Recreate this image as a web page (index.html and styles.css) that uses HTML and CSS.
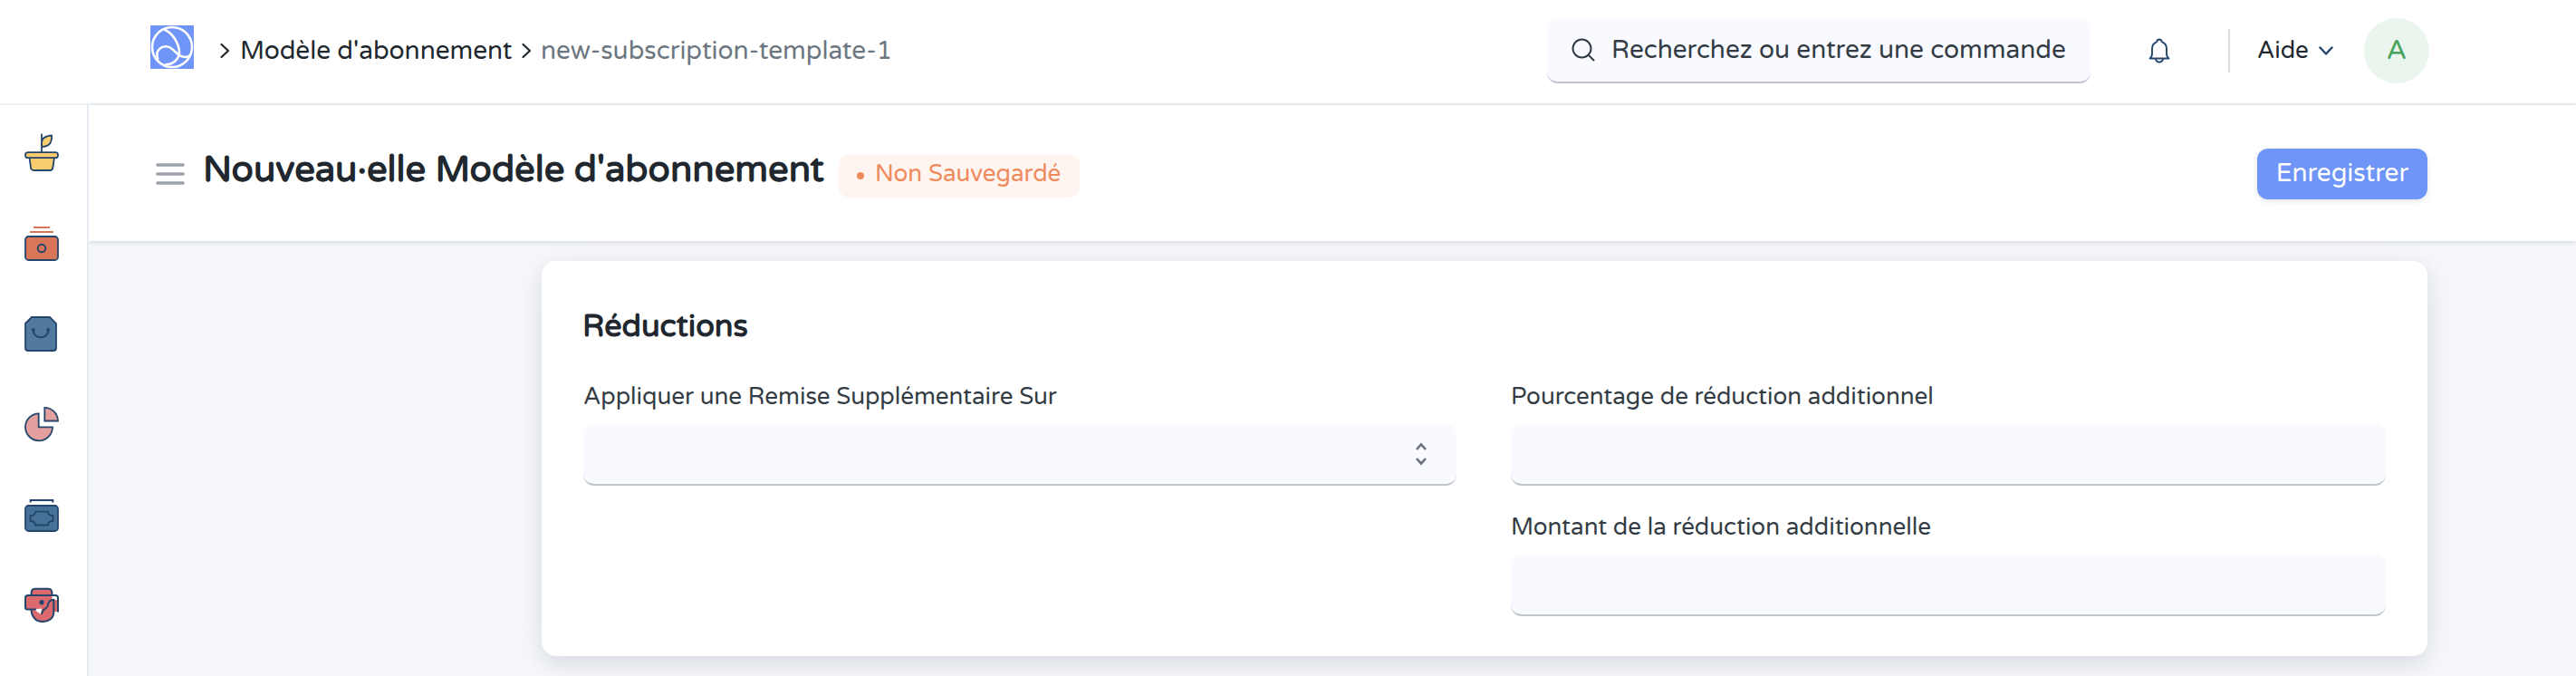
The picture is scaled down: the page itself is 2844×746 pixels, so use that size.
FILE: index.html
```html
<!DOCTYPE html>
<html lang="fr">
<head>
<meta charset="utf-8">
<title>Nouveau·elle Modèle d'abonnement</title>
<link rel="stylesheet" href="styles.css">
</head>
<body>
<header class="navbar">
  <svg class="logo" viewBox="0 0 48 48"><rect width="48" height="48" rx="1" fill="#6e95f7"/><g fill="none" stroke="#fff" stroke-width="2.6"><circle cx="24" cy="24" r="22"/><path d="M15.500 4.500C25 9 31 19 32 29C32 37 26 43 16 43.500"/><path d="M8.500 38C4 26 14 22.500 19 23.500C27 25 29 35 38 35C41 35 43 34 44 33"/></g></svg>
  <nav class="crumbs">
    <svg class="sep" viewBox="0 0 12 18"><path d="M2.500 2L10 9L2.500 16"/></svg>
    <span class="crumb crumb-link">Modèle d'abonnement</span>
    <svg class="sep" viewBox="0 0 12 18"><path d="M2.500 2L10 9L2.500 16"/></svg>
    <span class="crumb crumb-current">new-subscription-template-1</span>
  </nav>
  <div class="search">
    <svg class="search-icon" viewBox="0 0 26 26"><circle cx="11.500" cy="11.500" r="10"/><path d="M19 19L24.500 24.500"/></svg>
    <span class="search-text">Recherchez ou entrez une commande</span>
  </div>
  <svg class="bell" viewBox="0 0 24 28"><path d="M1.500 22.500H22.500C20.500 21 20 19.500 20 17V12C20 8 18 5.500 14.800 4.200C14.800 2.500 13.500 1.500 12 1.500S9.200 2.500 9.200 4.200C6 5.500 4 8 4 12V17C4 19.500 3.500 21 1.500 22.500ZM8 22.500C8 25 10 26.500 12 26.500S16 25 16 22.500"/></svg>
  <span class="divider"></span>
  <span class="help">Aide</span>
  <svg class="caret" viewBox="0 0 16 11"><path d="M1.500 1.500L8 8.500L14.500 1.500"/></svg>
  <span class="avatar">A</span>
</header>
<div class="shell">
  <aside class="rail">
    <svg class="rail-icon" viewBox="0 0 96 100"><g fill="#f9cd6d" stroke="#24466d" stroke-width="1.800" stroke-linejoin="round"><path d="M46 50V29.500M46 44C45 36 48 32 57 31.500C57.500 40 54 44 46 44Z"/><path d="M32.500 56L34 67C34.300 69.200 35.500 70 37.500 70H55C57 70 58 69 58.300 67L60 56Z"/><rect x="28" y="50.200" width="36" height="6" rx="2.800"/></g></svg>
    <svg class="rail-icon" viewBox="0 0 96 100"><path d="M37 33H55M33 38H59" stroke="#d97558" stroke-width="2"/><rect x="28" y="43" width="36" height="26" rx="3.500" fill="#d97558" stroke="#24466d" stroke-width="1.800"/><circle cx="46" cy="56" r="4.300" fill="none" stroke="#24466d" stroke-width="2"/></svg>
    <svg class="rail-icon" viewBox="0 0 96 100"><path d="M28 39L35 32H55L62 39V66Q62 69 59 69H31Q28 69 28 66Z" fill="#527a9e" stroke="#24466d" stroke-width="1.800"/><path d="M36.500 46C37 57 53 57 53.500 46" fill="none" stroke="#24466d" stroke-width="2"/><circle cx="36.800" cy="46" r="1.900" fill="#24466d"/><circle cx="53.200" cy="46" r="1.900" fill="#24466d"/></svg>
    <svg class="rail-icon" viewBox="0 0 96 100"><g fill="#e3a09f" stroke="#24466d" stroke-width="1.800"><path d="M42.700 38.300V53.300H58A15 15 0 1 1 42.700 38.300Z"/><path d="M49.300 31.800A15 15 0 0 1 64 46.500H49.300Z"/></g></svg>
    <svg class="rail-icon" viewBox="0 0 96 100"><path d="M33.700 36.500V34H58.300V36.500" fill="none" stroke="#24466d" stroke-width="2"/><rect x="28" y="40" width="36" height="28" rx="3.500" fill="#477297" stroke="#24466d" stroke-width="1.800"/><path d="M39 46.700H53C53 50 55.500 51 58.500 51V57C55.500 57 53 58.500 53 61.500H39C39 58.500 36.500 57 33.500 57V51C36.500 51 39 50 39 46.700Z" fill="none" stroke="#24466d" stroke-width="1.800"/></svg>
    <svg class="rail-icon" viewBox="0 0 96 100"><path d="M34.500 40C34.500 33 35.500 31.800 39 31.800H53C56.500 31.800 57.500 33 57.500 40V44H63V57H59.300C59.300 64 54 68 46.500 68C40 68 35 63 34.500 54H28V39H34.500Z" fill="#da6a6e"/><path d="M37 54.500L46 53.500L45.500 60Z" fill="#fff"/><g fill="none" stroke="#24466d" stroke-width="2"><path d="M34.500 38.500C34.500 33 35.500 31.800 39 31.800H53C56.500 31.800 57.500 33 57.500 38.500"/><path d="M40 54.500H30Q28 54.500 28 52.500V41.500Q28 39 31 39H61Q64 39 64 42V57.500"/><path d="M34.500 55C35 63 40 68 46.500 68C54 68 59.300 64 59.300 58V43.800C55 43.800 53 47 52.500 51C52 54.500 46.500 53 46 60"/></g><circle cx="46" cy="46.700" r="2.600" fill="#24466d"/></svg>
  </aside>
  <main class="page">
    <section class="page-head">
      <svg class="burger" viewBox="0 0 32 24"><path d="M2 2H30M2 12H30M2 22H30"/></svg>
      <h1 class="title">Nouveau·elle Modèle d'abonnement</h1>
      <span class="badge"><span class="dot"></span><span class="badge-text">Non Sauvegardé</span></span>
      <button class="save"><span class="save-text">Enregistrer</span></button>
    </section>
    <section class="card">
      <h2 class="card-title">Réductions</h2>
      <div class="columns">
        <div class="column">
          <div class="field">
            <label class="label label-apply">Appliquer une Remise Supplémentaire Sur</label>
            <div class="input select"><svg class="arrows" viewBox="0 0 14 26"><path d="M2 8L7 2.500L12 8M2 18L7 23.500L12 18"/></svg></div>
          </div>
        </div>
        <div class="column">
          <div class="field">
            <label class="label label-percent">Pourcentage de réduction additionnel</label>
            <div class="input"></div>
          </div>
          <div class="field">
            <label class="label label-amount">Montant de la réduction additionnelle</label>
            <div class="input"></div>
          </div>
        </div>
      </div>
    </section>
  </main>
</div>
</body>
</html>
```
FILE: styles.css
```css
* { box-sizing: border-box; }
body {
  margin: 0;
  height: 746px;
  overflow: hidden;
  background: #f5f7fb;
  color: #20272e;
  font-family: "Varela Round", "Noto Sans", sans-serif;
  font-size: 28px;
  line-height: 1;
}
svg { display: block; flex: none; }
span, h1, h2, label { white-space: nowrap; }
.navbar {
  display: flex;
  align-items: center;
  height: 116px;
  padding: 0 162px 2px 166px;
  background: #fff;
  border-bottom: 2px solid #edf2f7;
}
.logo { width: 48px; height: 48px; margin-bottom: 8px; }
.crumbs { display: flex; align-items: center; margin-left: 28px; }
.sep { width: 12px; height: 18px; fill: none; stroke: #20272e; stroke-width: 2.2; stroke-linecap: round; stroke-linejoin: round; }
.crumb-link { width: 299px; margin: 0 11px 0 11px; }
.crumb-current { margin-left: 10px; color: #6c7680; }
.search {
  display: flex;
  align-items: center;
  width: 600px;
  height: 72px;
  margin-left: auto;
  padding-left: 27px;
  background: #f9faff;
  border-bottom: 2px solid #c0c6cc;
  border-radius: 12px;
}
.search-icon { width: 26px; height: 26px; fill: none; stroke: #333c44; stroke-width: 2; stroke-linecap: round; }
.search-text { margin-left: 18px; color: #333c44; }
.bell { width: 24px; height: 28px; margin-left: 64px; fill: none; stroke: #24466d; stroke-width: 1.9; stroke-linejoin: round; }
.divider { width: 2px; height: 48px; margin-left: 64px; background: #d9dcdf; }
.help { width: 56px; margin-left: 30px; font-size: 26px; }
.caret { width: 16px; height: 11px; margin-left: 12px; fill: none; stroke: #24466d; stroke-width: 2.4; stroke-linecap: round; stroke-linejoin: round; }
.avatar {
  display: flex;
  align-items: center;
  justify-content: center;
  width: 72px;
  height: 72px;
  margin-left: 34px;
  border-radius: 50%;
  background: #eaf5ee;
  color: #48a260;
  font-size: 30px;
}
.shell { display: flex; height: 630px; }
.rail { position: relative; z-index: 2; width: 98px; padding-top: 2px; background: #fff; border-right: 2px solid #e6eaf1; }
.rail-icon { width: 96px; height: 100px; }
.page { flex: 1; min-width: 0; }
.page-head {
  position: relative;
  z-index: 1;
  display: flex;
  align-items: center;
  height: 150px;
  padding: 2px 164px 0 74px;
  background: #fff;
  box-shadow: 0 1px 6px rgba(25, 39, 52, .16);
}
.burger { width: 32px; height: 24px; fill: none; stroke: #9ca3ad; stroke-width: 3.6; stroke-linecap: round; }
.title { width: 685px; margin: 0 0 10px 21px; font-size: 40px; font-weight: 700; text-indent: -1px; }
.badge {
  display: flex;
  align-items: center;
  width: 266px;
  height: 48px;
  margin: 4px 0 0 16px;
  padding-left: 20px;
  border-radius: 12px;
  background: #fff5f0;
  color: #ee8a5c;
  font-size: 26px;
}
.dot { width: 8px; height: 8px; border-radius: 50%; background: currentColor; }
.badge-text { margin: 0 0 5px 12px; }
.save {
  width: 188px;
  height: 56px;
  margin-left: auto;
  padding: 0 0 2px;
  border: 0;
  border-radius: 12px;
  background: #6e95f7;
  box-shadow: 0 2px 6px rgba(25, 39, 52, .12);
  color: #fff;
  font: inherit;
}
.card {
  width: 2082px;
  height: 436px;
  margin: 22px 0 0 500px;
  padding: 56px 46px 0;
  border-radius: 16px;
  background: #fff;
  box-shadow: 0 8px 40px rgba(25, 39, 52, .06), 0 8px 20px rgba(25, 39, 52, .08);
}
.card-title { margin: 0 0 0 -1px; font-size: 34px; font-weight: 700; line-height: 34px; }
.columns { display: grid; grid-template-columns: 964px 966px; gap: 60px; margin-top: 40px; }
.field { height: 144px; padding-top: 5px; }
.label { display: block; height: 45px; color: #333c44; font-size: 26px; line-height: 30px; }
.input { height: 68px; border-radius: 12px; border-bottom: 2px solid #c0c6cc; background: #f9faff; }
.select { display: flex; align-items: center; justify-content: flex-end; padding-right: 32px; }
.arrows { width: 14px; height: 26px; fill: none; stroke: #69737d; stroke-width: 2.6; }
```
